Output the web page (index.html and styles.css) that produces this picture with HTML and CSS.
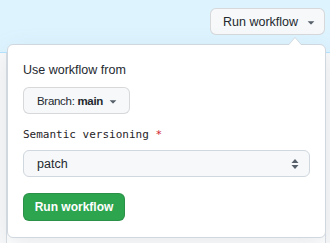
FILE: index.html
```html
<!DOCTYPE html>
<html lang="en">
<head>
  <meta charset="UTF-8">
  <title>Run workflow</title>
  <link rel="stylesheet" href="styles.css">
</head>
<body>
  <div class="banner">
    <button class="btn btn-top">Run workflow
      <svg class="caret" viewBox="0 0 16 16" width="14" height="14"><path d="m4.427 7.427 3.396 3.396a.25.25 0 0 0 .354 0l3.396-3.396A.25.25 0 0 0 11.396 7H4.604a.25.25 0 0 0-.177.427Z"/></svg>
    </button>
  </div>

  <div class="runs">
    <div class="run-row"></div>
    <div class="run-row"></div>
    <div class="run-row run-row-last"></div>
  </div>

  <div class="dialog">
    <div class="dialog-label">Use workflow from</div>
    <div class="branch-wrap">
      <button class="btn btn-branch"><span>Branch: <b>main</b></span>
        <svg class="caret" viewBox="0 0 16 16" width="14" height="14"><path d="m4.427 7.427 3.396 3.396a.25.25 0 0 0 .354 0l3.396-3.396A.25.25 0 0 0 11.396 7H4.604a.25.25 0 0 0-.177.427Z"/></svg>
      </button>
    </div>

    <div class="input-label">Semantic versioning <span class="required">*</span></div>
    <div class="select">
      <span>patch</span>
      <svg class="updown" viewBox="0 0 8 12" width="8" height="12"><path d="M4 1 7.5 5h-7Z"/><path d="M4 11 .5 7h7Z"/></svg>
    </div>

    <button class="btn btn-primary">Run workflow</button>
  </div>
</body>
</html>
```

FILE: styles.css
```css
body {
  margin: 0;
  font-family: 'Liberation Sans', Arial, sans-serif;
  font-size: 12.5px;
  color: #24292f;
  background: #f8f9fa;
}

.banner {
  height: 53px;
  box-sizing: border-box;
  background: #ddf4ff;
  border-bottom: 1px solid #b6e3ff;
  display: flex;
  justify-content: flex-end;
  align-items: flex-start;
  padding: 8px 5px 0 0;
}

.btn {
  font-family: inherit;
  font-size: 12.5px;
  color: #24292f;
  background: #f6f8fa;
  border: 1px solid rgba(31, 35, 40, 0.15);
  border-radius: 6px;
  height: 27px;
  padding: 0 12px;
  display: flex;
  align-items: center;
  gap: 4px;
  white-space: nowrap;
  cursor: pointer;
  box-sizing: border-box;
}

.btn-top {
  width: 115px;
  gap: 6px;
}

.caret {
  fill: #57606a;
  flex-shrink: 0;
}

.runs {
  margin: 0 4px 0 6px;
  background: #fff;
  border-left: 1px solid #d8dee4;
  border-right: 1px solid #d8dee4;
}

.run-row {
  height: 74px;
  box-sizing: border-box;
  border-bottom: 1px solid #d8dee4;
}

.run-row-last {
  height: 42px;
  border-bottom: none;
}

.dialog {
  position: absolute;
  left: 7px;
  top: 44px;
  width: 319px;
  height: 194px;
  box-sizing: border-box;
  background: #fff;
  border: 1px solid #d0d7de;
  border-radius: 6px;
  box-shadow: 0 8px 24px rgba(140, 149, 159, 0.2);
  padding: 15px 16px 16px 15px;
}

.dialog::before,
.dialog::after {
  content: '';
  position: absolute;
  right: 23px;
  border: 7px solid transparent;
}

.dialog::before {
  top: -15px;
  border-bottom: 8px solid #d0d7de;
}

.dialog::after {
  top: -14px;
  border-bottom: 8px solid #fff;
}

.dialog-label {
  line-height: 20px;
  margin-bottom: 7px;
}

.branch-wrap {
  display: flex;
}

.btn-branch {
  width: 107px;
  padding: 0 0 0 13px;
  gap: 3px;
  font-size: 11.5px;
  letter-spacing: -0.3px;
}

.btn-branch b {
  font-weight: 700;
}

.input-label {
  font-family: 'DejaVu Sans Mono', 'Liberation Mono', monospace;
  font-size: 11px;
  color: #1f2328;
  line-height: 17px;
  margin: 12px 0 7px;
}

.required {
  color: #cf222e;
}

.select {
  height: 27px;
  width: 287px;
  box-sizing: border-box;
  background: #f6f8fa;
  border: 1px solid #d0d7de;
  border-radius: 6px;
  display: flex;
  align-items: center;
  justify-content: space-between;
  padding: 0 10px 0 13px;
}

.updown {
  fill: #57606a;
}

.btn-primary {
  margin-top: 16px;
  width: 102px;
  height: 28px;
  background: #2da44e;
  color: #fff;
  font-weight: 700;
  font-size: 12px;
  border-color: rgba(31, 35, 40, 0.15);
  justify-content: center;
  padding: 0;
}
```
